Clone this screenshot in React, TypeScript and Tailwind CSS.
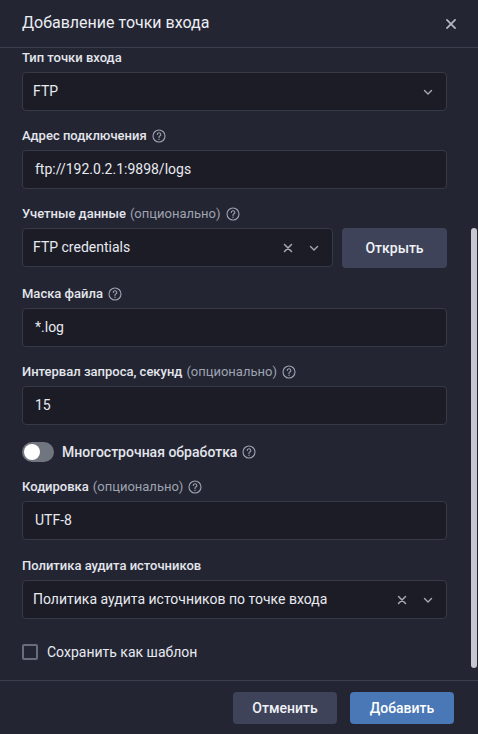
import { ReactNode } from 'react';

const font = { fontFamily: 'Roboto, "Noto Sans", sans-serif' };

function Help() {
  return (
    <svg width="14" height="14" viewBox="0 0 14 14" className="ml-[5px] shrink-0">
      <circle cx="7" cy="7" r="6" fill="none" stroke="#9ea3b0" strokeWidth="1.1" />
      <path d="M5.3 5.5a1.75 1.75 0 1 1 2.4 1.6c-.5.25-.7.55-.7 1.1v.3" fill="none" stroke="#9ea3b0" strokeWidth="1.1" strokeLinecap="round" />
      <circle cx="7" cy="10.2" r="0.7" fill="#9ea3b0" />
    </svg>
  );
}

function Chevron() {
  return (
    <svg width="12" height="12" viewBox="0 0 12 12">
      <path d="M2.5 4.5 6 8l3.5-3.5" fill="none" stroke="#a6aab6" strokeWidth="1.4" strokeLinecap="round" strokeLinejoin="round" />
    </svg>
  );
}

function Cross({ size = 12, color = '#a6aab6' }: { size?: number; color?: string }) {
  return (
    <svg width={size} height={size} viewBox="0 0 12 12">
      <path d="M2.5 2.5l7 7M9.5 2.5l-7 7" fill="none" stroke={color} strokeWidth="1.5" strokeLinecap="round" />
    </svg>
  );
}

function Label({ children, optional, help }: { children: ReactNode; optional?: boolean; help?: boolean }) {
  return (
    <div className="flex items-center h-[18px] mb-[5px] text-[13px] leading-[18px]">
      <span className="font-medium text-[#e4e6ec]">{children}</span>
      {optional && <span className="ml-[4px] text-[#9ea3b0]">(опционально)</span>}
      {help && <Help />}
    </div>
  );
}

function Field({ children, className = '' }: { children: ReactNode; className?: string }) {
  return (
    <div className={`h-[39px] flex items-center rounded-[4px] border border-[#363946] bg-[#1b1c26] pl-[10px] pr-[12px] text-[14px] text-[#e8eaf0] ${className}`}>
      {children}
    </div>
  );
}

export default function App() {
  return (
    <div className="w-[478px] h-[734px] bg-[#232533] flex flex-col" style={font}>
      <header className="h-[48px] shrink-0 flex items-center justify-between pl-[22px] pr-[20px] border-b border-[#3a3e4f]">
        <h1 className="text-[16px] text-[#eceef3] pb-[2px]">Добавление точки входа</h1>
        <Cross size={14} color="#b4b8c4" />
      </header>

      <div className="relative flex-1 overflow-hidden pl-[22px] pr-[31px] pt-[1px]">
        <div className="mb-[16px]">
          <Label>Тип точки входа</Label>
          <Field className="justify-between">
            <span>FTP</span>
            <Chevron />
          </Field>
        </div>

        <div className="mb-[16px]">
          <Label help>Адрес подключения</Label>
          <Field>
            <span className="pl-[2px]">ftp://192.0.2.1:9898/logs</span>
          </Field>
        </div>

        <div className="mb-[17px]">
          <Label optional help>Учетные данные</Label>
          <div className="flex gap-[9px]">
            <Field className="flex-1 justify-between">
              <span>FTP credentials</span>
              <div className="flex items-center gap-[14px]">
                <Cross />
                <Chevron />
              </div>
            </Field>
            <button className="w-[105px] h-[40px] rounded-[4px] bg-[#3e4359] text-[14px] font-medium text-[#f0f2f6]">
              Открыть
            </button>
          </div>
        </div>

        <div className="mb-[16px]">
          <Label help>Маска файла</Label>
          <Field>
            <span className="pl-[2px]">*.log</span>
          </Field>
        </div>

        <div className="mb-[17px]">
          <Label optional help>Интервал запроса, секунд</Label>
          <Field>
            <span className="pl-[2px]">15</span>
          </Field>
        </div>

        <div className="flex items-center h-[20px] mb-[16px]">
          <div className="w-[32px] h-[20px] rounded-full bg-[#70757f] flex items-center pl-[2px] shrink-0">
            <div className="w-[16px] h-[16px] rounded-full bg-white" />
          </div>
          <span className="ml-[8px] text-[14px] font-medium text-[#e4e6ec]">Многострочная обработка</span>
          <Help />
        </div>

        <div className="mb-[17px]">
          <Label optional help>Кодировка</Label>
          <Field>
            <span className="pl-[2px]">UTF-8</span>
          </Field>
        </div>

        <div className="mb-[25px]">
          <Label>Политика аудита источников</Label>
          <Field className="justify-between">
            <span>Политика аудита источников по точке входа</span>
            <div className="flex items-center gap-[14px]">
              <Cross />
              <Chevron />
            </div>
          </Field>
        </div>

        <label className="flex items-center h-[16px]">
          <span className="w-[16px] h-[16px] rounded-[2px] border-2 border-[#686d7c] shrink-0" />
          <span className="ml-[9px] text-[14px] text-[#e8eaf0]">Сохранить как шаблон</span>
        </label>

        <div className="absolute right-[1px] top-[180px] w-[6px] h-[440px] rounded-full bg-[#c6c7cf]" />
      </div>

      <footer className="h-[54px] shrink-0 border-t border-[#3a3e4f] flex items-center justify-end gap-[13px] pr-[24px] pt-[1px]">
        <button className="w-[104px] h-[32px] rounded-[4px] bg-[#3e4359] text-[14px] font-medium text-[#f0f2f6]">
          Отменить
        </button>
        <button className="w-[104px] h-[32px] rounded-[4px] bg-[#4a77b6] text-[14px] font-medium text-white">
          Добавить
        </button>
      </footer>
    </div>
  );
}
